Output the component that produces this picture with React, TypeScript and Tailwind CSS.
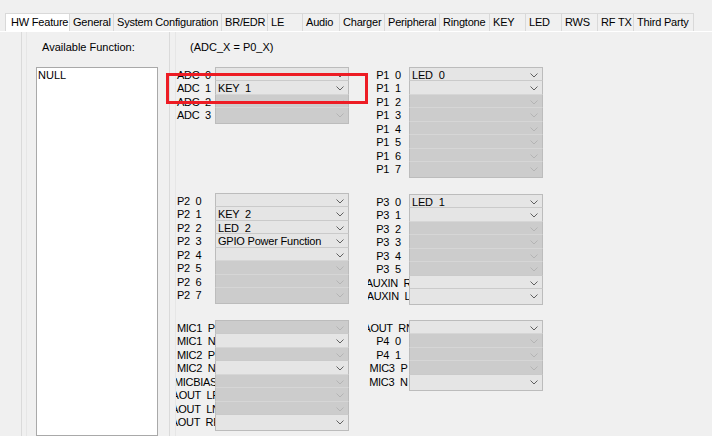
import React from "react";

type Row = { label: string; value?: string; on: boolean; center?: boolean; plain?: boolean };

const HEIGHTS = ["h-[13px]", "h-[14px]", "h-[13px]", "h-[14px]", "h-[13px]", "h-[14px]", "h-[13px]"];

function Chevron({ on }: { on: boolean }) {
  return (
    <svg width="8" height="5" viewBox="0 0 8 5" className="shrink-0 mt-[5px] mr-[4px]">
      <polyline
        points="0.5,0.5 4,4 7.5,0.5"
        fill="none"
        stroke={on ? "#606060" : "#b4b4b4"}
        strokeWidth="1"
      />
    </svg>
  );
}

function Group({ rows, labelW, comboW, side }: { rows: Row[]; labelW: string; comboW: string; side: "l" | "r" }) {
  return (
    <div className="flex flex-col">
      {rows.map((r, i) => {
        const last = i === rows.length - 1;
        const h = last ? "h-[17px]" : HEIGHTS[i];
        const topColor =
          i === 0 ? "border-t-[#bcbcbc]" : r.on ? "border-t-[#cacaca]" : "border-t-[#d6d6d6]";
        const labelAlign = r.center ? "justify-center" : side === "l" ? "justify-start pl-[1px]" : "justify-center";
        return (
          <div key={i} className={`flex ${h}`}>
            <div className={`${labelW} flex ${labelAlign} overflow-x-clip`}>
              <span className="whitespace-nowrap leading-[14px] pt-[1px] tracking-[-0.3px] [word-spacing:3px]">{r.label}</span>
            </div>
            <div
              className={`${comboW} flex items-start border-x border-t border-x-[#bcbcbc] ${topColor} ${
                last ? "border-b border-b-[#bcbcbc]" : ""
              } ${r.on ? "bg-[#e5e5e5]" : "bg-[#cccccc]"}`}
            >
              <span
                className={`flex-1 pl-[2px] whitespace-nowrap leading-[14px] ${
                  r.plain ? "tracking-[-0.2px]" : "tracking-[-0.2px] [word-spacing:3px]"
                }`}
              >
                {r.value ?? ""}
              </span>
              <Chevron on={r.on} />
            </div>
          </div>
        );
      })}
    </div>
  );
}

const adc: Row[] = [
  { label: "ADC 0", on: true },
  { label: "ADC 1", value: "KEY 1", on: true },
  { label: "ADC 2", on: false },
  { label: "ADC 3", on: false },
];
const p1: Row[] = [
  { label: "P1 0", value: "LED 0", on: true },
  { label: "P1 1", on: true },
  { label: "P1 2", on: false },
  { label: "P1 3", on: false },
  { label: "P1 4", on: false },
  { label: "P1 5", on: false },
  { label: "P1 6", on: false },
  { label: "P1 7", on: false },
];
const p2: Row[] = [
  { label: "P2 0", on: true },
  { label: "P2 1", value: "KEY 2", on: true },
  { label: "P2 2", value: "LED 2", on: true },
  { label: "P2 3", value: "GPIO Power Function", on: true, plain: true },
  { label: "P2 4", on: true },
  { label: "P2 5", on: false },
  { label: "P2 6", on: false },
  { label: "P2 7", on: false },
];
const p3: Row[] = [
  { label: "P3 0", value: "LED 1", on: true },
  { label: "P3 1", on: true },
  { label: "P3 2", on: false },
  { label: "P3 3", on: false },
  { label: "P3 4", on: false },
  { label: "P3 5", on: false },
  { label: "AUXIN R", on: true },
  { label: "AUXIN L", on: true },
];
const mic: Row[] = [
  { label: "MIC1 P", on: false },
  { label: "MIC1 N", on: true },
  { label: "MIC2 P", on: false },
  { label: "MIC2 N", on: true },
  { label: "MICBIAS", on: false, center: true },
  { label: "AOUT LP", on: false, center: true },
  { label: "AOUT LN", on: false, center: true },
  { label: "AOUT RP", on: true, center: true },
];
const aout: Row[] = [
  { label: "AOUT RN", on: true },
  { label: "P4 0", on: false },
  { label: "P4 1", on: false },
  { label: "MIC3 P", on: false },
  { label: "MIC3 N", on: true },
];

const tabs: { t: string; w: string }[] = [
  { t: "HW Feature", w: "w-[65px]" },
  { t: "General", w: "w-[44px]" },
  { t: "System Configuration", w: "w-[108px]" },
  { t: "BR/EDR", w: "w-[46px]" },
  { t: "LE", w: "w-[35px]" },
  { t: "Audio", w: "w-[37px]" },
  { t: "Charger", w: "w-[45px]" },
  { t: "Peripheral", w: "w-[55px]" },
  { t: "Ringtone", w: "w-[50px]" },
  { t: "KEY", w: "w-[36px]" },
  { t: "LED", w: "w-[36px]" },
  { t: "RWS", w: "w-[36px]" },
  { t: "RF TX", w: "w-[36px]" },
  { t: "Third Party", w: "w-[60px]" },
];

export default function App() {
  return (
    <div className="relative w-[712px] h-[436px] overflow-hidden bg-[#f0f0f0] text-black text-[11px] font-['Liberation_Sans',Arial,sans-serif]">
      {/* tab strip */}
      <div className="flex pt-[13px] pl-[5px]">
        {tabs.map((tb, i) => (
          <div
            key={tb.t}
            className={`${tb.w} h-[18px] border-t border-r border-[#d9d9d9] ${i === 0 ? "border-l bg-white pl-[5px]" : "pl-[3px]"} leading-[17px] whitespace-nowrap tracking-[-0.2px] overflow-hidden`}
          >
            {tb.t}
          </div>
        ))}
      </div>
      <div className="h-px bg-white" />

      {/* content */}
      <div className="flex h-[404px]">
        <div className="w-[21px]" />
        {/* left panel */}
        <div className="w-[148px] border-l border-[#dadada] flex">
          <div className="ml-[4px] flex-1 border-l border-[#e6e6e6] flex flex-col">
            <div className="pt-[8px] pl-[15px] leading-[14px]">Available Function:</div>
            <div className="mt-[13px] ml-[9px] w-[122px] h-[400px] bg-white border border-[#a9a9a9]">
              <div className="pl-[1px] leading-[14px]">NULL</div>
            </div>
          </div>
        </div>
        {/* right panel */}
        <div className="flex-1 border-l border-[#dadada] flex">
          <div className="ml-[5px] flex-1 border-l border-[#e6e6e6] flex flex-col">
            <div className="pt-[8px] pl-[14px] leading-[14px]">(ADC_X = P0_X)</div>
            <div className="mt-[13px] grid grid-cols-[192px_180px] grid-rows-[126px_127px_auto] items-start">
              <Group rows={adc} labelW="w-[39px]" comboW="w-[134px]" side="l" />
              <Group rows={p1} labelW="w-[41px]" comboW="w-[134px]" side="r" />
              <Group rows={p2} labelW="w-[39px]" comboW="w-[134px]" side="l" />
              <div className="mt-[1px]">
                <Group rows={p3} labelW="w-[41px]" comboW="w-[134px]" side="r" />
              </div>
              <Group rows={mic} labelW="w-[39px]" comboW="w-[134px]" side="l" />
              <Group rows={aout} labelW="w-[41px]" comboW="w-[134px]" side="r" />
            </div>
          </div>
        </div>
      </div>

      {/* red highlight */}
      <div className="absolute left-[166px] top-[73px] w-[202px] h-[31px] border-[3px] border-[#ed1c24]" />
    </div>
  );
}
